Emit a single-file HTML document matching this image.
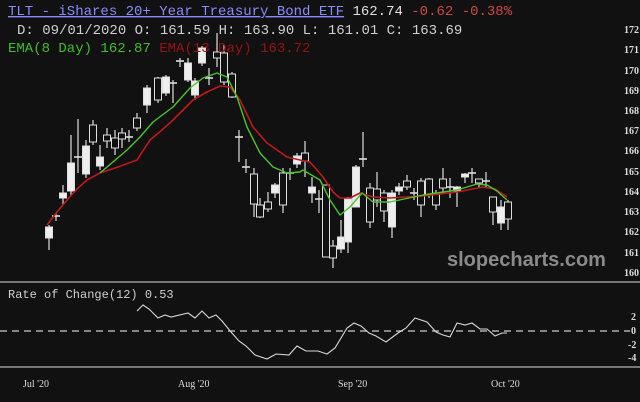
<!DOCTYPE html>
<html><head><meta charset="utf-8"><style>
html,body{margin:0;padding:0;background:#111;width:640px;height:402px;overflow:hidden}
svg{display:block}
.m{font-family:"Liberation Mono",monospace;font-size:14px}
.s{font-family:"Liberation Serif",serif;font-size:10px;fill:#ddd}
</style></head><body>
<svg id="c" width="640" height="402" xmlns="http://www.w3.org/2000/svg">
<rect width="640" height="402" fill="#111"/>
<text x="8" y="15" class="m"><tspan fill="#8a8aff" text-decoration="underline">TLT - iShares 20+ Year Treasury Bond ETF</tspan><tspan fill="#e0e0e0"> 162.74 </tspan><tspan fill="#d04848">-0.62 -0.38%</tspan></text>
<text x="17" y="34" class="m" fill="#cfcfcf">D: 09/01/2020 O: 161.59 H: 163.90 L: 161.01 C: 163.69</text>
<g id="cand"></g>
<polyline fill="none" stroke="#c01818" stroke-width="1.6" stroke-linejoin="round" points="47,225 57,212 67,200 77,189 87,180 100,173 118,167 137,160 150,140 162,130 173,120 183,110 193,100 207,92 220,86 230,87 240,100 253,127 267,143 287,157 300,160 310,162 323,177 333,192 340,198 350,198 360,193 373,197 390,198 423,196 457,192 483,187 495,189 507,197"/>
<polyline fill="none" stroke="#49c42a" stroke-width="1.4" stroke-linejoin="round" points="100,173 127,150 140,137 153,122 173,107 190,88 203,78 217,73 227,77 237,97 247,127 260,153 273,167 287,173 300,172 303,170 320,180 330,200 340,215 350,207 362,193 373,202 390,202 423,195 457,190 477,184 487,185 497,191 507,200"/>
<text x="8" y="52" class="m" fill="#3fbf2a">EMA(8 Day) 162.87 <tspan fill="#9a1010">EMA(13 Day) 163.72</tspan></text>
<text x="447" y="266" font-family="Liberation Sans,sans-serif" font-weight="bold" font-size="20" fill="#8a8a8a">slopecharts.com</text>
<g class="s" font-weight="bold">
<text x="624" y="33">172</text><text x="624" y="53">171</text><text x="624" y="74">170</text><text x="624" y="94">169</text><text x="624" y="114">168</text><text x="624" y="134">167</text><text x="624" y="154">166</text><text x="624" y="175">165</text><text x="624" y="195">164</text><text x="624" y="215">163</text><text x="624" y="235">162</text><text x="624" y="256">161</text><text x="624" y="276">160</text>
</g>
<rect x="0" y="281" width="640" height="2" fill="#777"/>
<rect x="0" y="366" width="640" height="2" fill="#777"/>
<text x="8" y="298" font-family="Liberation Mono,monospace" font-size="12" fill="#d0d0d0">Rate of Change(12)  0.53</text>
<line x1="0" y1="331" x2="630" y2="331" stroke="#ccc" stroke-width="1.3" stroke-dasharray="7,5"/>
<polyline fill="none" stroke="#d8d8d8" stroke-width="1.1" points="137,311 143,305 149,309 158,318 165,315 171,317 188,313 195,318 202,311 209,318 216,315 222,321 231,332 239,341 246,346 255,355 267,359 276,354 289,355 297,346 306,351 318,351 327,354 335,348 347,328 354,323 361,326 369,333 376,336 386,342 398,333 406,328 415,318 427,322 436,332 443,335 450,337 457,323 465,325 472,323 480,329 487,329 495,336 502,333 507,333"/>
<g class="s" font-size="9" font-weight="bold"><text x="631" y="320">2</text><text x="631" y="334">0</text><text x="628" y="348">-2</text><text x="628" y="361">-4</text></g>
<g class="s" font-size="10" fill="#e0e0e0"><text x="23" y="387">Jul '20</text><text x="178" y="387">Aug '20</text><text x="338" y="387">Sep '20</text><text x="491" y="387">Oct '20</text></g>
</svg>
<script>
var d=[[49,227,238,225,250,'w'],[56,216,218,213,221,'c'],[63,193,198,185,205,'w'],[71,163,191,135,195,'w'],[78,157,158,119,173,'c'],[86,146,174,140,178,'w'],[93,125,142,120,145,'b'],[100,157,166,145,170,'w'],[107,135,141,128,148,'b'],[115,138,148,130,155,'b'],[122,133,139,128,148,'b'],[129,137,138,130,142,'c'],[137,118,128,113,131,'b'],[147,88,105,85,113,'w'],[158,78,100,77,103,'b'],[166,77,93,75,96,'w'],[173,83,84,80,103,'c'],[180,61,62,58,67,'c'],[188,63,80,58,82,'w'],[195,81,95,78,100,'w'],[202,48,63,46,66,'w'],[209,78,79,68,85,'c'],[217,52,58,33,67,'b'],[224,53,82,45,85,'b'],[232,74,97,72,98,'b'],[239,137,138,130,162,'c'],[246,167,168,159,173,'c'],[254,174,204,168,217,'b'],[260,205,217,198,218,'b'],[268,202,209,192,212,'b'],[275,185,193,183,198,'w'],[283,173,205,168,213,'b'],[290,173,176,168,180,'c'],[297,156,164,153,168,'w'],[305,153,161,141,177,'b'],[312,187,193,177,203,'w'],[319,199,200,190,213,'c'],[326,185,257,185,257,'b'],[333,246,258,240,268,'b'],[341,237,249,220,253,'w'],[348,199,242,197,253,'w'],[356,167,207,165,207,'w'],[363,159,161,132,167,'c'],[370,188,222,183,228,'b'],[377,189,200,172,207,'b'],[384,193,211,190,222,'b'],[392,193,227,190,238,'w'],[399,187,191,183,195,'w'],[407,181,187,175,190,'b'],[414,193,194,188,200,'c'],[421,181,205,178,217,'b'],[429,179,195,178,198,'b'],[436,193,205,190,210,'b'],[443,179,188,168,193,'b'],[450,187,189,178,198,'c'],[457,187,191,186,207,'w'],[465,174,177,173,183,'w'],[472,173,174,168,183,'c'],[479,179,183,179,188,'b'],[486,181,182,172,187,'c'],[493,197,212,197,225,'b'],[501,207,223,200,230,'w'],[508,202,219,200,230,'b']];
var s='';d.forEach(function(c){var x=c[0];s+='<line x1="'+x+'" y1="'+c[3]+'" x2="'+x+'" y2="'+c[4]+'" stroke="#ddd" stroke-width="1.2"/>';
if(c[5]=='c'){s+='<line x1="'+(x-4)+'" y1="'+c[1]+'" x2="'+(x+4)+'" y2="'+c[1]+'" stroke="#ddd" stroke-width="1.6"/>';}
else{var h=Math.max(c[2]-c[1],2);s+='<rect x="'+(x-3.5)+'" y="'+c[1]+'" width="7" height="'+h+'" fill="'+(c[5]=='w'?'#eee':'#111')+'" stroke="#ddd" stroke-width="1"/>';}});
document.getElementById('cand').innerHTML=s;
</script>
</body></html>
